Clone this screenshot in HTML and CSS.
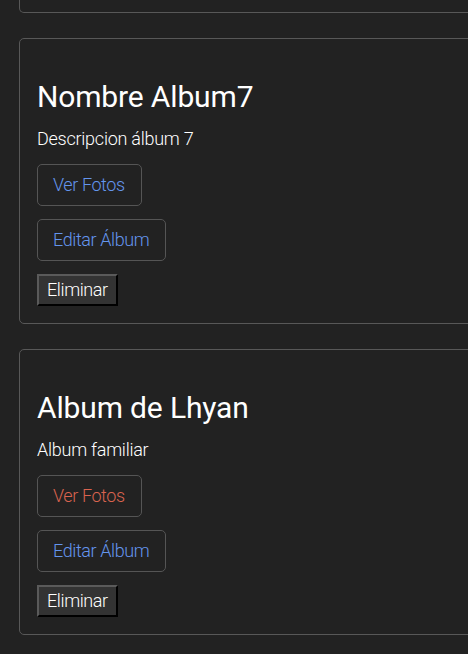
FILE: index.html
```html
<!DOCTYPE html>
<html lang="es">
<head>
<meta charset="utf-8">
<title>Álbumes</title>
<link rel="stylesheet" href="styles.css">
</head>
<body>
<main class="albums">
  <section class="card card-prev"></section>
  <section class="card">
    <h2 class="card-title">Nombre Album7</h2>
    <p class="card-desc">Descripcion álbum 7</p>
    <div class="actions">
      <a class="btn btn-link" href="#">Ver Fotos</a>
      <a class="btn btn-link" href="#">Editar Álbum</a>
      <button class="btn-delete" type="button">Eliminar</button>
    </div>
  </section>
  <section class="card">
    <h2 class="card-title">Album de Lhyan</h2>
    <p class="card-desc">Album familiar</p>
    <div class="actions">
      <a class="btn btn-link btn-visited" href="#">Ver Fotos</a>
      <a class="btn btn-link" href="#">Editar Álbum</a>
      <button class="btn-delete" type="button">Eliminar</button>
    </div>
  </section>
</main>
</body>
</html>
```

FILE: styles.css
```css
html, body {
  margin: 0;
  padding: 0;
  background: #222222;
  overflow: hidden;
}

body {
  font-family: Roboto, "Liberation Sans", sans-serif;
  color: #ffffff;
}

.albums {
  padding-left: 19px;
  display: flex;
  flex-direction: column;
  gap: 25px;
}

.card {
  width: 520px;
  border: 1px solid #585858;
  border-radius: 5px;
  padding: 16px 17px 17px;
  box-sizing: border-box;
  display: flex;
  flex-direction: column;
  align-items: flex-start;
}

.card-prev {
  height: 13px;
  padding: 0;
  border-top: none;
  border-radius: 0 0 5px 5px;
}

.card-title {
  font-size: 30px;
  font-weight: 400;
  line-height: 35px;
  letter-spacing: -0.15px;
  margin: 24px 0 14px;
  color: #ffffff;
}

.card-desc {
  font-size: 18px;
  font-weight: 300;
  line-height: 21px;
  letter-spacing: -0.25px;
  margin: 0 0 15px;
  color: #ffffff;
}

.actions {
  display: flex;
  flex-direction: column;
  align-items: flex-start;
  gap: 13px;
}

.btn {
  display: inline-block;
  font-size: 18px;
  font-weight: 300;
  line-height: 22px;
  letter-spacing: -0.4px;
  padding: 9px 16px 9px 15px;
  border: 1px solid #555555;
  border-radius: 5px;
  text-decoration: none;
}

.btn-link {
  color: #6495ed;
}

.btn-visited {
  color: #d9634f;
}

.btn-delete {
  font-family: Roboto, "Liberation Sans", sans-serif;
  font-size: 18px;
  font-weight: 300;
  line-height: 22px;
  letter-spacing: -0.4px;
  padding: 3px 8px 3px 8px;
  color: #ffffff;
  background: #333333;
  border: 2px outset #5a5a5a;
  border-color: #5a5a5a #000000 #000000 #5a5a5a;
  border-radius: 0;
}
```
